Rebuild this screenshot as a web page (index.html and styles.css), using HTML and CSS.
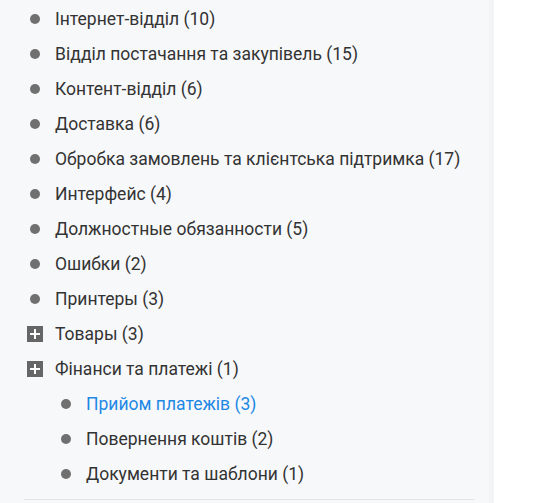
FILE: index.html
```html
<!DOCTYPE html>
<html lang="uk">
<head>
    <meta charset="UTF-8">
    <meta name="viewport" content="width=device-width, initial-scale=1.0">
    <title>Категорії</title>
    <link rel="stylesheet" href="styles.css">
</head>
<body>

    <div class="sidebar">
        <ul class="tree">
            <li class="item"><span class="dot"></span><span class="name">Інтернет-відділ (10)</span></li>
            <li class="item"><span class="dot"></span><span class="name">Відділ постачання та закупівель (15)</span></li>
            <li class="item"><span class="dot"></span><span class="name">Контент-відділ (6)</span></li>
            <li class="item"><span class="dot"></span><span class="name">Доставка (6)</span></li>
            <li class="item"><span class="dot"></span><span class="name">Обробка замовлень та клієнтська підтримка (17)</span></li>
            <li class="item"><span class="dot"></span><span class="name">Интерфейс (4)</span></li>
            <li class="item"><span class="dot"></span><span class="name">Должностные обязанности (5)</span></li>
            <li class="item"><span class="dot"></span><span class="name">Ошибки (2)</span></li>
            <li class="item"><span class="dot"></span><span class="name">Принтеры (3)</span></li>
            <li class="item"><span class="plus"></span><span class="name">Товары (3)</span></li>
            <li class="item"><span class="plus"></span><span class="name">Фінанси та платежі (1)</span></li>
            <li>
                <ul class="tree sub">
                    <li class="item"><span class="dot"></span><a class="name active" href="#">Прийом платежів (3)</a></li>
                    <li class="item"><span class="dot"></span><span class="name">Повернення коштів (2)</span></li>
                    <li class="item"><span class="dot"></span><span class="name">Документи та шаблони (1)</span></li>
                </ul>
            </li>
        </ul>
        <div class="divider"></div>
    </div>

</body>
</html>
```

FILE: styles.css
```css
body {
    margin: 0;
    background: #fff;
    font-family: Roboto, "Noto Sans", Arial, sans-serif;
}

.sidebar {
    width: 494px;
    height: 503px;
    padding-top: 1px;
    box-sizing: border-box;
    background: #f7f8fa;
    border-right: 5px solid #f3f4f6;
}

.tree {
    list-style: none;
    margin: 0;
    padding: 0 0 0 27px;
}

.tree.sub {
    padding-left: 31px;
}

.item {
    display: flex;
    align-items: center;
    height: 35px;
    gap: 12px;
    font-size: 17.5px;
    color: #333;
}

.dot {
    width: 16px;
    height: 16px;
    display: flex;
    align-items: center;
    justify-content: center;
}

.dot::before {
    content: "";
    width: 10px;
    height: 10px;
    border-radius: 50%;
    background: #707070;
}

.plus {
    width: 16px;
    height: 16px;
    background: #666;
    position: relative;
}

.plus::before,
.plus::after {
    content: "";
    position: absolute;
    background: #fff;
}

.plus::before {
    left: 3px;
    top: 7px;
    width: 10px;
    height: 2px;
}

.plus::after {
    left: 7px;
    top: 3px;
    width: 2px;
    height: 10px;
}

.name {
    color: #333;
    text-decoration: none;
}

.name.active {
    color: #1e88e5;
}

.divider {
    margin: 8px 15px 0 24px;
    border-top: 1px solid #e3e4e6;
}
```
